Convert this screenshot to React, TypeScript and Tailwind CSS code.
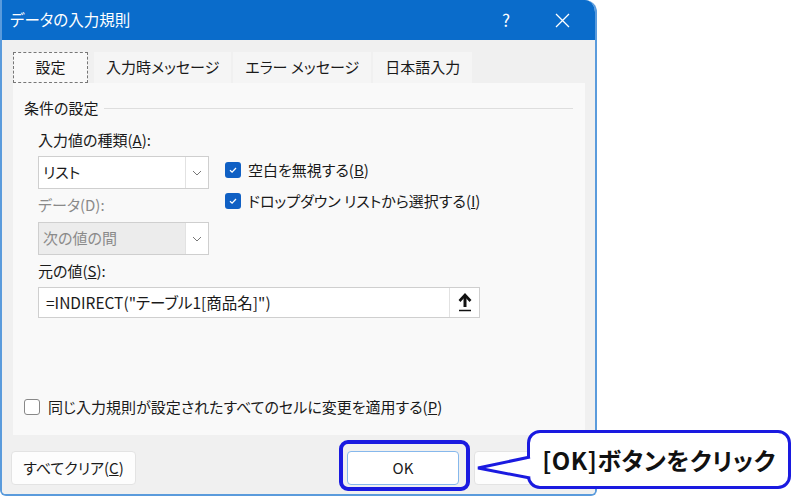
import React from "react"

const jp = "font-['Noto_Sans_CJK_JP','Noto_Sans',sans-serif] [font-feature-settings:'palt']"

const Check = () => (
  <span className="w-[16px] h-[16px] rounded-[3px] bg-[#1060c4] flex items-center justify-center shrink-0">
    <svg width="10" height="10" viewBox="0 0 10 10">
      <path d="M2 5.2 L4.1 7.2 L8 3" fill="none" stroke="white" strokeWidth="1.3" />
    </svg>
  </span>
)

const Chevron = () => (
  <svg width="10" height="6" viewBox="0 0 10 6">
    <path d="M1 1 L5 5 L9 1" fill="none" stroke="#777" strokeWidth="1" />
  </svg>
)

const Select = ({ value, disabled }: { value: string; disabled?: boolean }) => (
  <div className={`w-[171px] h-[33px] flex border border-[#cfcfcf] ${disabled ? "bg-[#ececec]" : "bg-white"}`}>
    <div className={`flex-1 flex items-center pl-[4px] text-[15px] ${disabled ? "text-[#8a8a8a]" : "text-[#1a1a1a]"}`}>{value}</div>
    <div className="w-[23px] flex items-center justify-center bg-white border-l border-[#e2e2e2]">
      <Chevron />
    </div>
  </div>
)

const Tab = ({ label, active }: { label: string; active?: boolean }) => (
  <div
    className={`h-[31px] flex items-center justify-center text-[15px] text-[#1a1a1a] ${
      active ? "w-[75px] bg-[#f9f9f9] border border-dashed border-[#777]" : "bg-[#f5f5f5] px-[12px]"
    }`}
  >
    {label}
  </div>
)

export default function App() {
  return (
    <div className={`relative w-[800px] h-[498px] bg-white overflow-hidden ${jp}`}>
      {/* Dialog */}
      <div className="w-[597px] h-[496px] flex flex-col rounded-tr-[12px] rounded-b-[6px] overflow-hidden border-x-2 border-b-2 border-[#5a9bdc]">
        {/* Title bar */}
        <div className="h-[40px] shrink-0 bg-[#0a6ccb] flex items-center pl-[8px] text-white">
          <div className="text-[15.5px] flex-1">データの入力規則</div>
          <div className="text-[17px] w-[30px] text-center mr-[34px]">?</div>
          <svg width="15" height="15" viewBox="0 0 15 15" className="mr-[25px]">
            <path d="M1 1 L14 14 M14 1 L1 14" stroke="white" strokeWidth="1.3" />
          </svg>
        </div>

        {/* Body */}
        <div className="flex-1 bg-[#f0f0f0] pl-[11px] pr-[10px] pt-[12px] flex flex-col">
          {/* Tabs */}
          <div className="flex gap-[2px] h-[31px]">
            <Tab label="設定" active />
            <div className="w-[2px]" />
            <Tab label="入力時メッセージ" />
            <Tab label="エラー メッセージ" />
            <Tab label="日本語入力" />
          </div>

          {/* Panel */}
          <div className="h-[352px] bg-[#f9f9f9] flex flex-col pl-[11px] pr-[12px] text-[15px] text-[#1a1a1a]">
            <div className="flex items-center mt-[14px] h-[22px]">
              <span>条件の設定</span>
              <div className="flex-1 ml-[6px] h-px bg-[#dedede]" />
            </div>

            <div className="flex pl-[14px] mt-[10px]">
              <div className="flex flex-col w-[171px]">
                <div className="h-[22px] leading-[22px]">
                  入力値の種類(<span className="underline">A</span>):
                </div>
                <div className="mt-[5px]">
                  <Select value="リスト" />
                </div>
                <div className="h-[22px] leading-[22px] mt-[5px] text-[#8a8a8a]">データ(D):</div>
                <div className="mt-[6px]">
                  <Select value="次の値の間" disabled />
                </div>
              </div>
              <div className="flex flex-col ml-[16px] mt-[30px] gap-[9px]">
                <div className="flex items-center gap-[7px] h-[22px]">
                  <Check />
                  <span>
                    空白を無視する(<span className="underline">B</span>)
                  </span>
                </div>
                <div className="flex items-center gap-[7px] h-[22px]">
                  <Check />
                  <span>
                    ドロップダウン リストから選択する(<span className="underline">I</span>)
                  </span>
                </div>
              </div>
            </div>

            <div className="pl-[14px] mt-[5px] h-[22px] leading-[22px]">
              元の値(<span className="underline">S</span>):
            </div>
            <div className="ml-[14px] mt-[5px] w-[442px] h-[31px] flex bg-white border border-[#cfcfcf]">
              <div className="flex-1 flex items-center pl-[7px] text-[15.5px]">=INDIRECT("テーブル1[商品名]")</div>
              <div className="w-[30px] flex items-center justify-center border-l border-[#e2e2e2]">
                <svg width="16" height="19" viewBox="0 0 16 19">
                  <path d="M8 2.5 L8 14" fill="none" stroke="#111" strokeWidth="3" />
                  <path d="M2.5 8 L8 2 L13.5 8" fill="none" stroke="#111" strokeWidth="2.6" />
                  <path d="M2 17.5 L14 17.5" stroke="#111" strokeWidth="1.5" />
                </svg>
              </div>
            </div>

            <div className="flex-1" />
            <div className="flex items-center gap-[8px] mb-[17px] h-[22px]">
              <span className="w-[16px] h-[16px] rounded-[3px] border border-[#888] bg-white shrink-0" />
              <span>
                同じ入力規則が設定されたすべてのセルに変更を適用する(<span className="underline">P</span>)
              </span>
            </div>
          </div>

          {/* Buttons */}
          <div className="flex items-start mt-[16px] text-[15px] text-[#1a1a1a]">
            <div className="w-[125px] h-[34px] -ml-[2px] flex items-center justify-center bg-[#fdfdfd] border border-[#e3e3e3] rounded-[4px]">
              すべてクリア(<span className="underline">C</span>)
            </div>
            <div className="flex-1" />
            <div className="w-[112px] h-[34px] flex items-center justify-center bg-white border border-[#86b8ec] rounded-[4px]">
              OK
            </div>
            <div className="w-[111px] h-[34px] ml-[15px] bg-[#fdfdfd] border border-[#e3e3e3] rounded-[4px]" />
          </div>
        </div>
      </div>

      {/* Annotation: highlight around OK */}
      <div className="absolute left-[339px] top-[440px] w-[131px] h-[51px] border-[4px] border-[#1a1ae0] rounded-[9px]" />

      {/* Annotation: callout */}
      <div className="absolute left-[527px] top-[430px] w-[264px] h-[59px] bg-white border-[3px] border-[#1a1ae0] rounded-[13px] flex items-center justify-center">
        <span className="text-[24px] font-bold text-[#111] tracking-[0.5px]">[OK]ボタンをクリック</span>
      </div>
      <svg className="absolute left-[474px] top-[454px]" width="58" height="28" viewBox="0 0 58 28">
        <path d="M56 3 L4 14 L56 24" fill="white" stroke="#1a1ae0" strokeWidth="3" strokeLinejoin="miter" />
        <path d="M55 5 L55 22" stroke="white" strokeWidth="3" />
      </svg>
    </div>
  )
}
